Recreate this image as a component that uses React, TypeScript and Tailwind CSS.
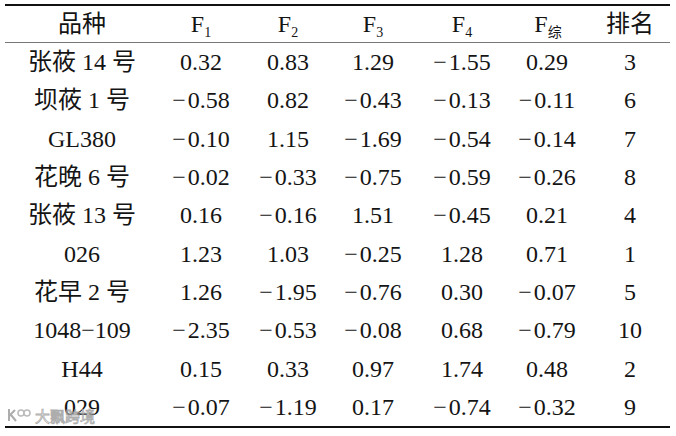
import React from "react";

const M = "\u2212\u200A";

const rows: string[][] = [
  ["张莜 14 号", "0.32", "0.83", "1.29", M + "1.55", "0.29", "3"],
  ["坝莜 1 号", M + "0.58", "0.82", M + "0.43", M + "0.13", M + "0.11", "6"],
  ["GL380", M + "0.10", "1.15", M + "1.69", M + "0.54", M + "0.14", "7"],
  ["花晚 6 号", M + "0.02", M + "0.33", M + "0.75", M + "0.59", M + "0.26", "8"],
  ["张莜 13 号", "0.16", M + "0.16", "1.51", M + "0.45", "0.21", "4"],
  ["026", "1.23", "1.03", M + "0.25", "1.28", "0.71", "1"],
  ["花早 2 号", "1.26", M + "1.95", M + "0.76", "0.30", M + "0.07", "5"],
  ["1048\u2212109", M + "2.35", M + "0.53", M + "0.08", "0.68", M + "0.79", "10"],
  ["H44", "0.15", "0.33", "0.97", "1.74", "0.48", "2"],
  ["029", M + "0.07", M + "1.19", "0.17", M + "0.74", M + "0.32", "9"],
];

const grid = "grid grid-cols-[154px_84px_90px_80px_98px_72px_87px]";

function F({ sub }: { sub: string }) {
  return (
    <span>
      F<sub className="text-[14px] align-baseline relative top-[5px]">{sub}</sub>
    </span>
  );
}

export default function App() {
  return (
    <div
      className="relative w-[676px] h-[436px] bg-white text-[#141414] text-[24px] leading-none"
      style={{ fontFamily: '"Liberation Serif", "Noto Sans CJK SC", serif' }}
    >
      <div className="absolute left-[5px] top-[4px] w-[665px]">
        <div className="border-t-2 border-[#111]" />
        <div className={`${grid} h-[37px] items-center border-b-[1.5px] border-[#777]`}>
          <div className="text-center">品种</div>
          <div className="text-center"><F sub="1" /></div>
          <div className="text-center"><F sub="2" /></div>
          <div className="text-center"><F sub="3" /></div>
          <div className="text-center"><F sub="4" /></div>
          <div className="text-center pl-[2px]"><F sub="综" /></div>
          <div className="text-center pl-[7px]">排名</div>
        </div>
        {rows.map((r, i) => (
          <div key={i} className={`${grid} h-[38.3px] items-center`}>
            {r.map((c, j) => (
              <div
                key={j}
                className={`text-center whitespace-pre ${j === 6 ? "pl-[7px]" : ""}`}
              >
                {c}
              </div>
            ))}
          </div>
        ))}
        <div className="border-t-2 border-[#111]" />
      </div>
      <div className="absolute left-[6px] top-[407px] flex items-center gap-[3px] opacity-80">
        <svg width="26" height="16" viewBox="0 0 26 16">
          <path d="M3 2 L3 14 M3 9 L9 3 M5 8 L10 14" stroke="#999" strokeWidth="2" fill="none" />
          <circle cx="15" cy="6" r="3" stroke="#aaa" strokeWidth="1.5" fill="#fff" />
          <circle cx="21" cy="6" r="3" stroke="#aaa" strokeWidth="1.5" fill="#fff" />
        </svg>
        <span
          className="text-[15px] text-white"
          style={{ fontFamily: '"Noto Sans CJK SC", sans-serif', WebkitTextStroke: "0.8px #999" }}
        >
          大飘跨境
        </span>
      </div>
    </div>
  );
}
